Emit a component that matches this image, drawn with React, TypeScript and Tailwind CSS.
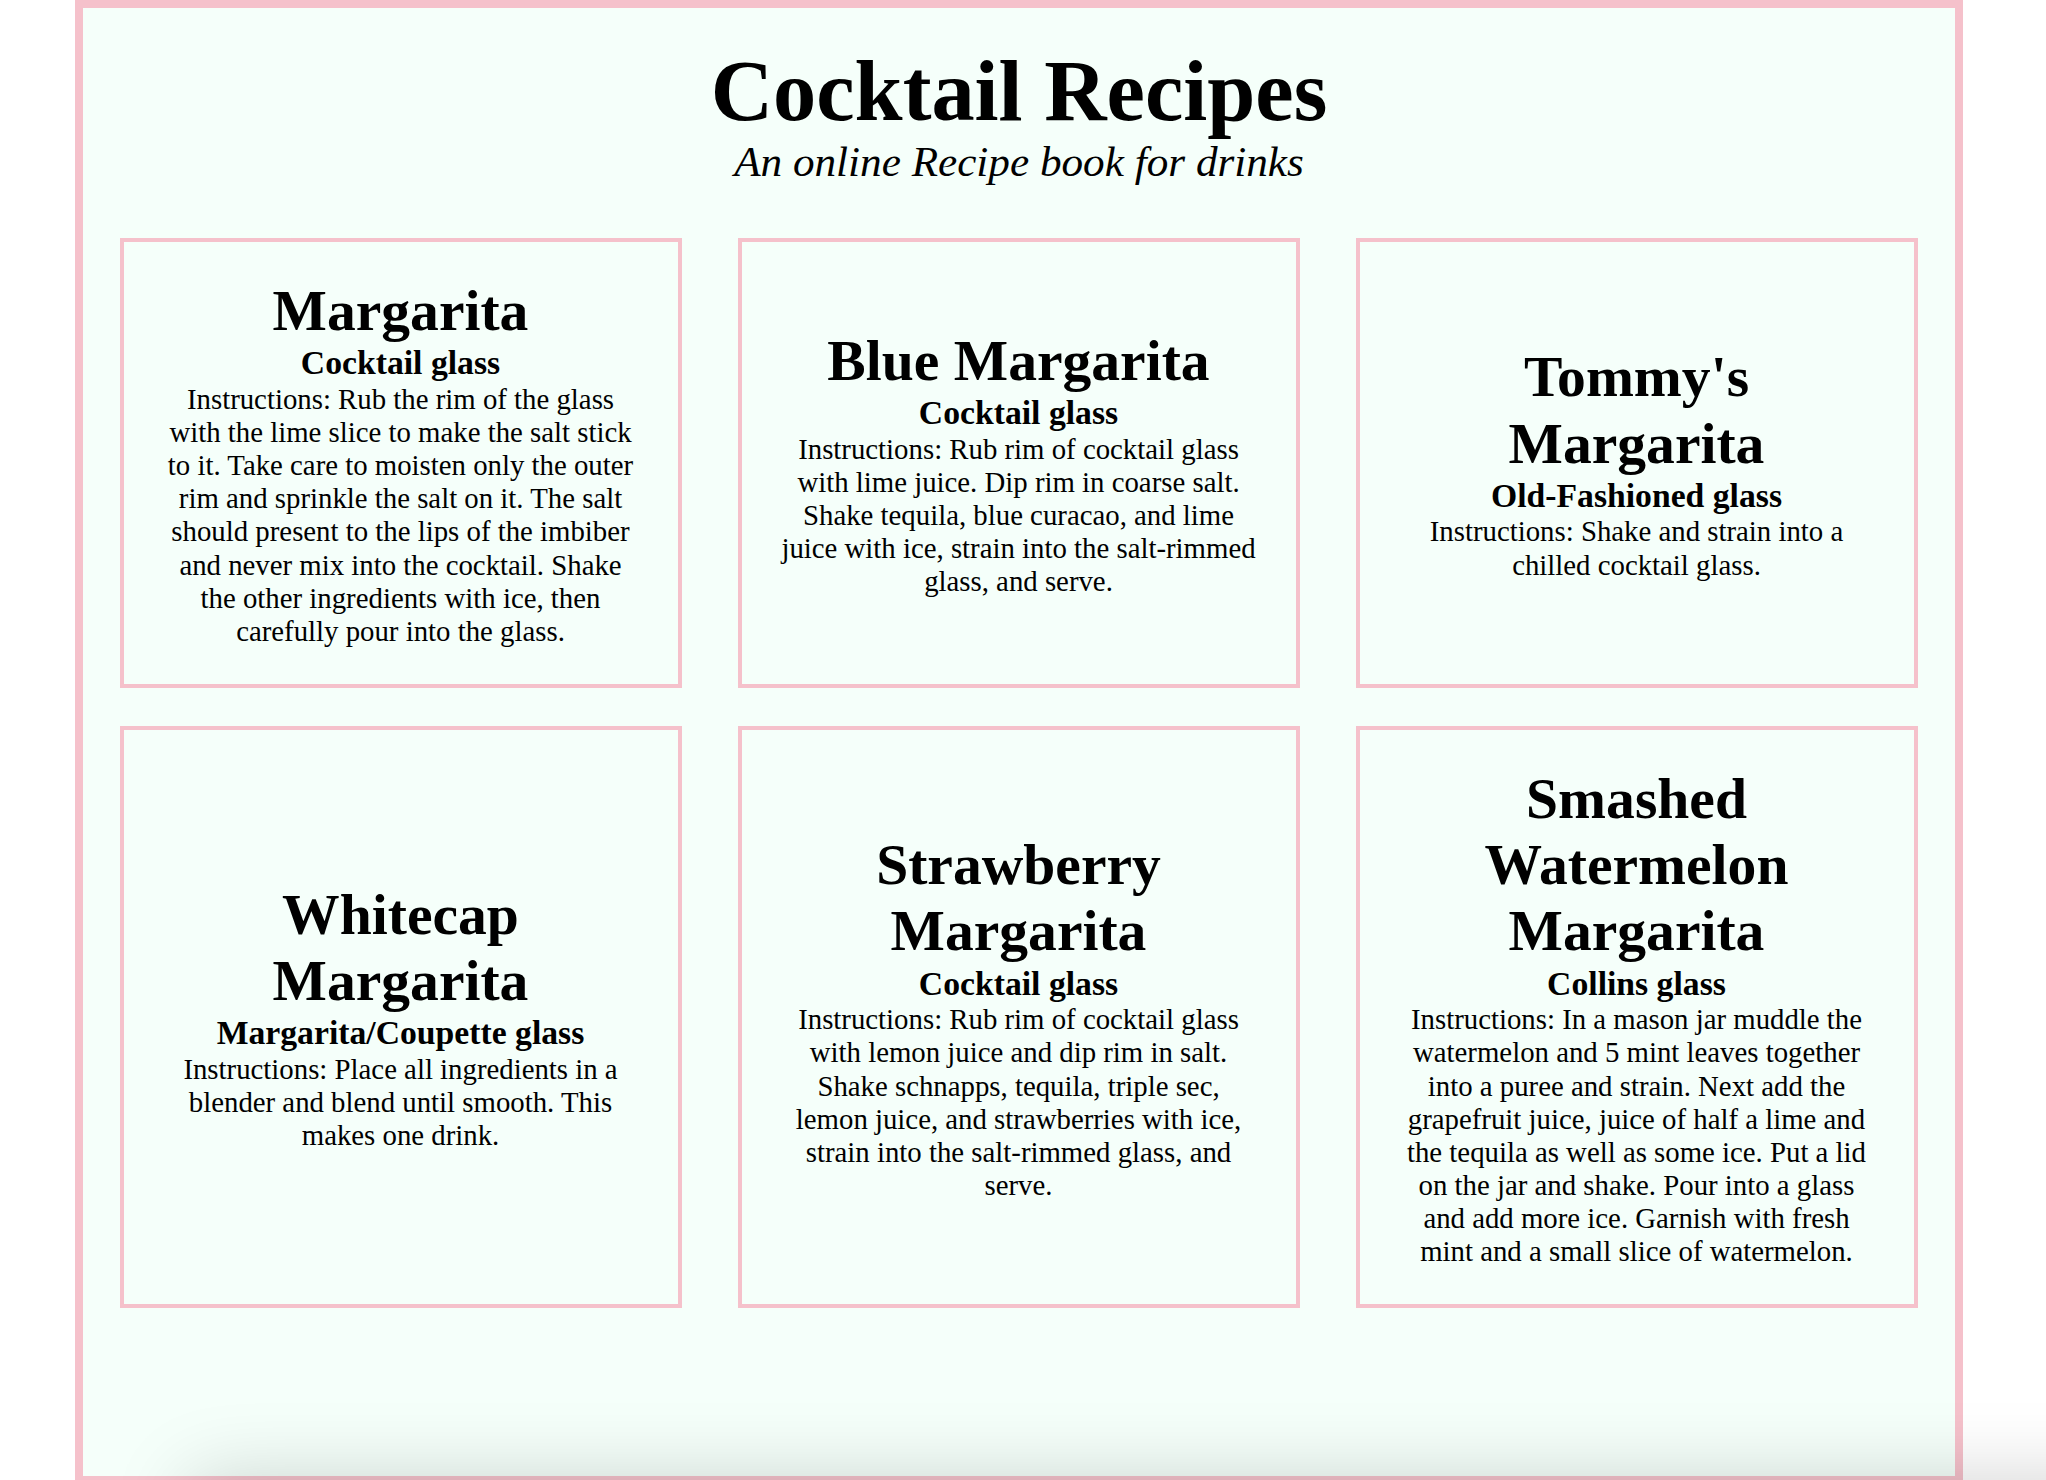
const drinks = [
  {
    name: "Margarita",
    glass: "Cocktail glass",
    instructions:
      "Rub the rim of the glass with the lime slice to make the salt stick to it. Take care to moisten only the outer rim and sprinkle the salt on it. The salt should present to the lips of the imbiber and never mix into the cocktail. Shake the other ingredients with ice, then carefully pour into the glass.",
  },
  {
    name: "Blue Margarita",
    glass: "Cocktail glass",
    instructions:
      "Rub rim of cocktail glass with lime juice. Dip rim in coarse salt. Shake tequila, blue curacao, and lime juice with ice, strain into the salt-rimmed glass, and serve.",
  },
  {
    name: "Tommy's Margarita",
    glass: "Old-Fashioned glass",
    instructions: "Shake and strain into a chilled cocktail glass.",
  },
  {
    name: "Whitecap Margarita",
    glass: "Margarita/Coupette glass",
    instructions: "Place all ingredients in a blender and blend until smooth. This makes one drink.",
  },
  {
    name: "Strawberry Margarita",
    glass: "Cocktail glass",
    instructions:
      "Rub rim of cocktail glass with lemon juice and dip rim in salt. Shake schnapps, tequila, triple sec, lemon juice, and strawberries with ice, strain into the salt-rimmed glass, and serve.",
  },
  {
    name: "Smashed Watermelon Margarita",
    glass: "Collins glass",
    instructions:
      "In a mason jar muddle the watermelon and 5 mint leaves together into a puree and strain. Next add the grapefruit juice, juice of half a lime and the tequila as well as some ice. Put a lid on the jar and shake. Pour into a glass and add more ice. Garnish with fresh mint and a small slice of watermelon.",
  },
];

const DrinkCard = ({ name, glass, instructions }: { name: string; glass: string; instructions: string }) => {
  return (
    <div className="flex flex-col justify-center border-4 border-[#f5c1cb] bg-[#f5fffa] py-9 pl-[38px] pr-[39px] text-center">
      <h2 className="text-[57.6px] font-bold leading-[1.15]">{name}</h2>
      <h3 className="text-[33.7px] font-bold leading-[1.15]">{glass}</h3>
      <p className="text-[28.8px] leading-[1.15]">Instructions: {instructions}</p>
    </div>
  );
};

export default function App() {
  return (
    <div
      className="relative h-[1480px] overflow-hidden bg-white text-black"
      style={{ fontFamily: '"Liberation Serif", "Times New Roman", serif' }}
    >
      <main className="ml-[75px] h-[1484px] w-[1888px] border-8 border-[#f5c1cb] bg-[#f5fffa] pt-10">
        <header className="text-center">
          <h1 className="text-[86.4px] font-bold leading-none">Cocktail Recipes</h1>
          <p className="mt-[3px] text-[43.2px] italic leading-[1.15]">An online Recipe book for drinks</p>
        </header>
        <section className="mt-[51px] grid grid-cols-3 gap-x-[56px] gap-y-[38px] px-[37px]">
          {drinks.map((d) => (
            <DrinkCard key={d.name} {...d} />
          ))}
        </section>
      </main>
      <div className="pointer-events-none absolute left-[190px] right-[-200px] top-[1480px] h-[200px] shadow-[0_0_80px_0_rgba(0,0,0,0.18)]"></div>
    </div>
  );
}
